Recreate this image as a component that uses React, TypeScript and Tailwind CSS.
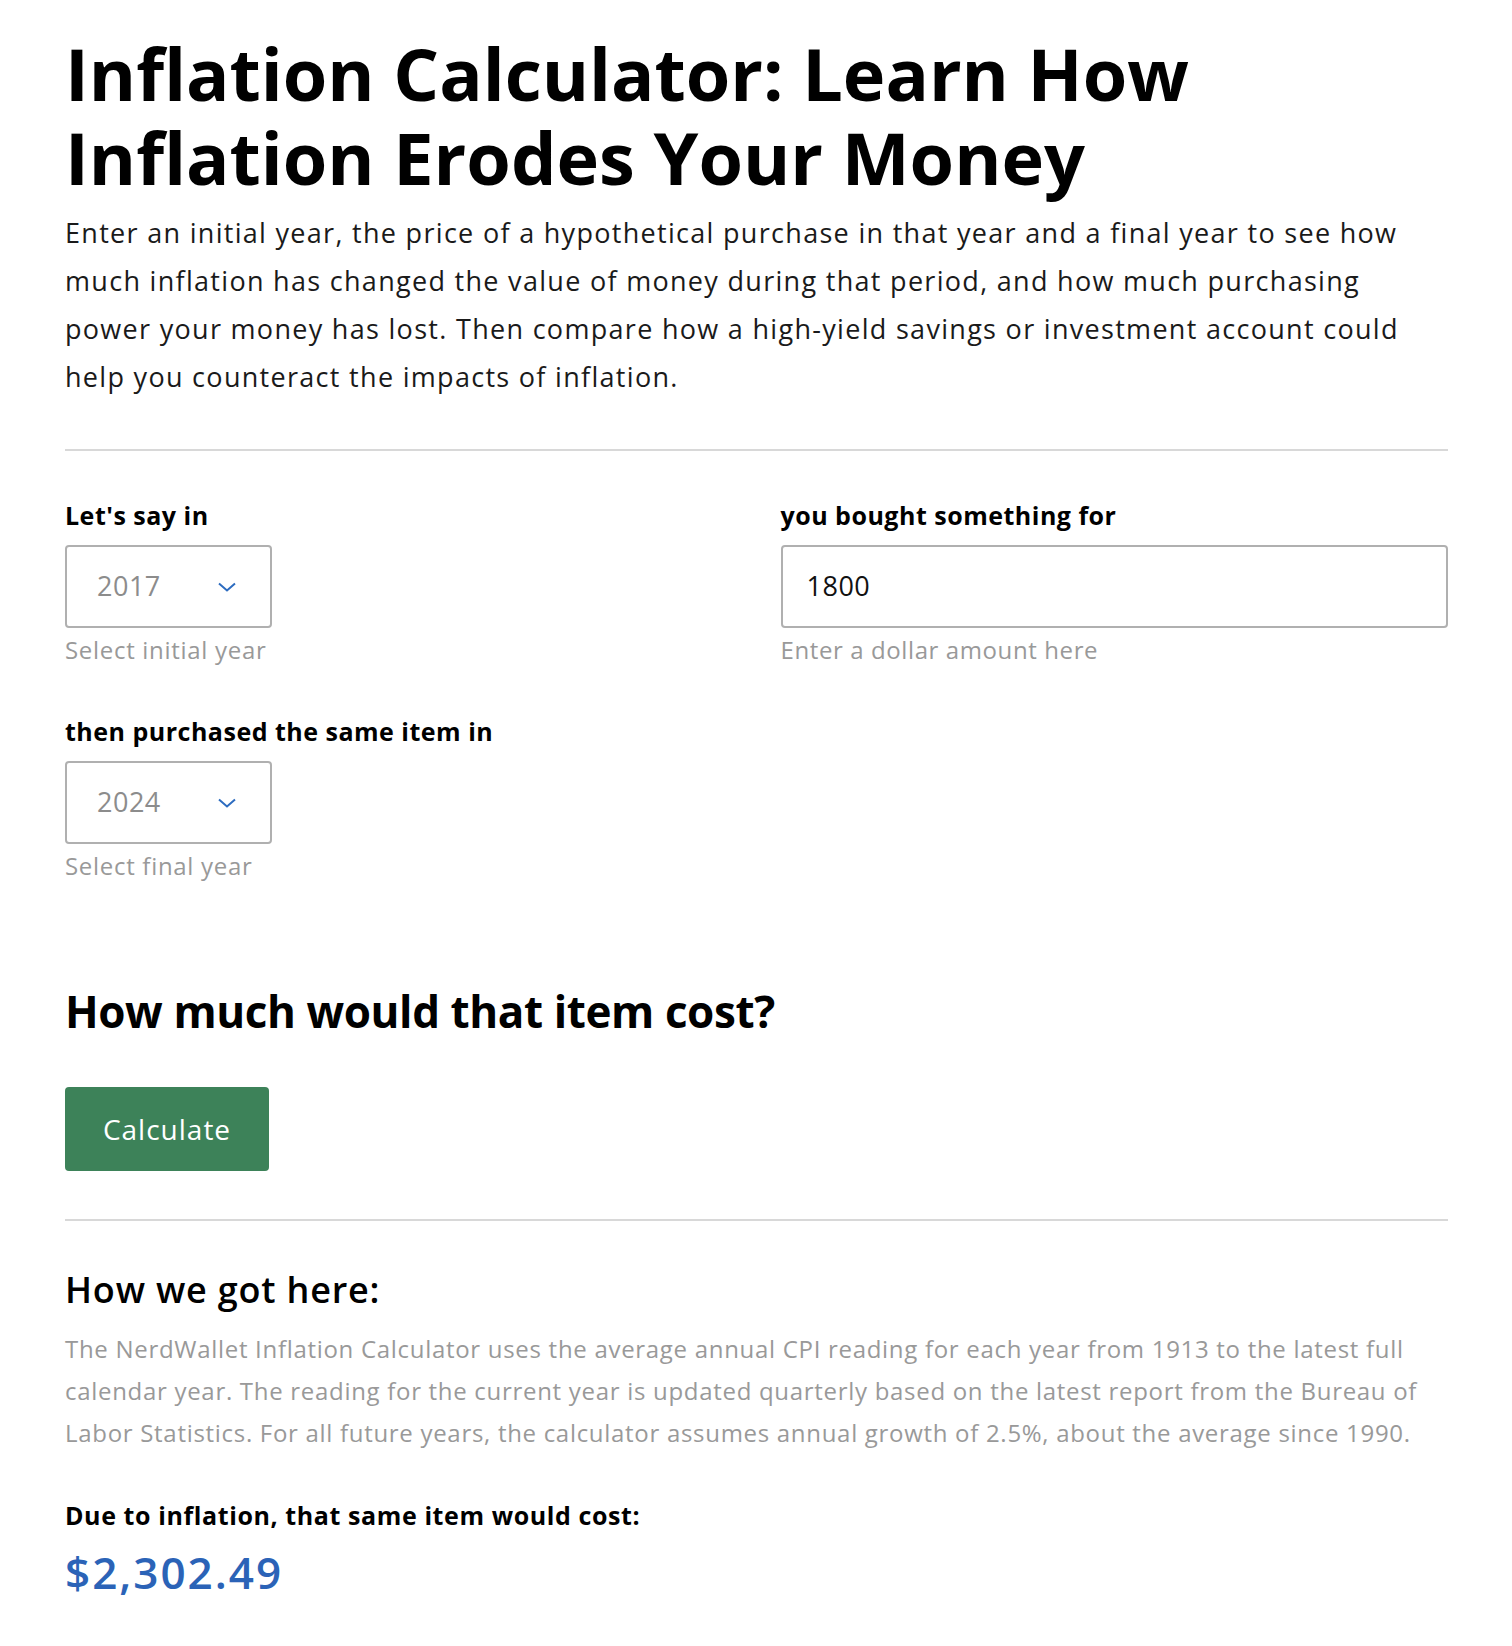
import React from 'react';

function Chevron() {
  return (
    <svg width="18" height="10" viewBox="0 0 18 10" fill="none">
      <path d="M1 1.5 L9 8.5 L17 1.5" stroke="#2d6cc0" strokeWidth="2" />
    </svg>
  );
}

function YearSelect({ year, hint }: { year: string; hint: string }) {
  return (
    <div>
      <div className="w-[207px] h-[83px] border-2 border-[#b0b0b0] rounded-[4px] flex items-center justify-between pl-[30px] pr-[34px]">
        <span className="text-[27px] tracking-[0.5px] text-[#8c8c8c]">{year}</span>
        <Chevron />
      </div>
      <p className="mt-[6px] text-[24px] leading-[32px] tracking-[0.7px] text-[#999999]">{hint}</p>
    </div>
  );
}

export default function App() {
  return (
    <div className="min-h-[1646px] bg-white font-['Open_Sans',sans-serif] text-black">
      <div className="w-[1383px] ml-[65px] pt-[31px]">
        {/* Header */}
        <h1 className="text-[72px] leading-[84px] font-bold">
          Inflation Calculator: Learn How Inflation Erodes Your Money
        </h1>
        <p className="mt-[10px] text-[27px] leading-[48px] tracking-[1.3px] text-[#1a1a1a]">
          Enter an initial year, the price of a hypothetical purchase in that year and a final year to see how much
          inflation has changed the value of money during that period, and how much purchasing power your money has
          lost. Then compare how a high-yield savings or investment account could help you counteract the impacts of
          inflation.
        </p>

        <div className="mt-[48px] h-[2px] bg-[#d8d8d8]" />

        {/* Form */}
        <div className="mt-[48px] grid grid-cols-2 gap-x-12">
          <div>
            <label className="block text-[25px] leading-[32px] tracking-[0.5px] font-bold mb-[14px]">Let's say in</label>
            <YearSelect year="2017" hint="Select initial year" />
          </div>
          <div>
            <label className="block text-[25px] leading-[32px] tracking-[0.5px] font-bold mb-[14px]">
              you bought something for
            </label>
            <div className="h-[83px] border-2 border-[#b0b0b0] rounded-[4px] flex items-center pl-[24px]">
              <span className="text-[27px] tracking-[0.5px] text-[#111]">1800</span>
            </div>
            <p className="mt-[6px] text-[24px] leading-[32px] tracking-[0.6px] text-[#999999]">
              Enter a dollar amount here
            </p>
          </div>
        </div>

        <div className="mt-[49px]">
          <label className="block text-[25px] leading-[32px] tracking-[0.5px] font-bold mb-[14px]">
            then purchased the same item in
          </label>
          <YearSelect year="2024" hint="Select final year" />
        </div>

        {/* Result trigger */}
        <h2 className="mt-[101px] text-[44px] leading-[56px] tracking-[-0.4px] font-bold">How much would that item cost?</h2>
        <button className="mt-[48px] w-[204px] h-[84px] rounded-[4px] bg-[#3d8259] text-white text-[28px] tracking-[1px]">
          Calculate
        </button>

        <div className="mt-[48px] h-[2px] bg-[#d8d8d8]" />

        {/* Explanation */}
        <h3 className="mt-[47px] text-[36px] leading-[44px] tracking-[0.8px] font-semibold">How we got here:</h3>
        <p className="mt-[16px] text-[24px] leading-[42px] tracking-[0.7px] text-[#999999]">
          The NerdWallet Inflation Calculator uses the average annual CPI reading for each year from 1913 to the latest
          full calendar year. The reading for the current year is updated quarterly based on the latest report from the
          Bureau of Labor Statistics. For all future years, the calculator assumes annual growth of 2.5%, about the
          average since 1990.
        </p>

        <p className="mt-[45px] text-[25px] leading-[32px] tracking-[0.6px] font-bold">
          Due to inflation, that same item would cost:
        </p>
        <p className="mt-[15px] text-[44px] leading-[52px] tracking-[2px] font-semibold text-[#2b63b7]">$2,302.49</p>
      </div>
    </div>
  );
}
